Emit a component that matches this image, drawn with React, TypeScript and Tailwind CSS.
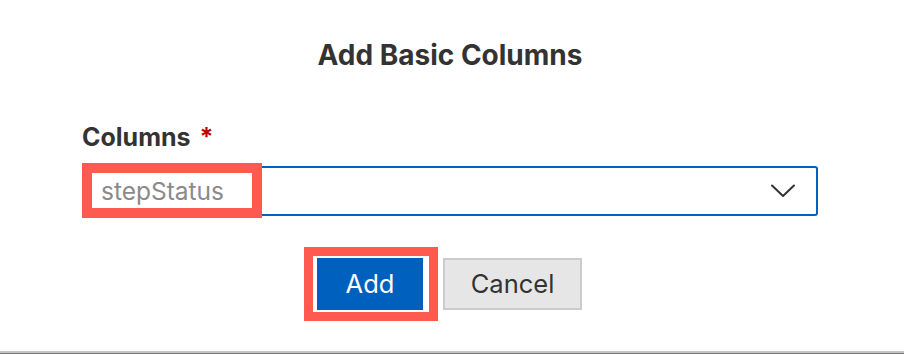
export default function App() {
  return (
    <div
      className="relative h-[354px] w-[904px] overflow-hidden bg-white text-[#333]"
      style={{ fontFamily: 'Inter, "Liberation Sans", sans-serif' }}
    >
      <div className="flex w-[900px] flex-col items-center pt-[37px]">
        <h2 className="text-[28px] font-bold leading-[36px] text-[#333]">Add Basic Columns</h2>

        <div className="mt-[48px] w-[736px] self-start ml-[82px]">
          <label className="flex items-center text-[25px] font-bold leading-[32px] text-[#333]">
            Columns
            <span className="ml-[9px] text-[#c00000]">*</span>
          </label>

          <div className="relative mt-[13px]">
            <div className="flex h-[50px] items-center justify-between rounded-[3px] border-2 border-[#0061c1] bg-white pl-[17px] pr-[21px]">
              <span className="text-[24.5px] text-[#8a8a8a]">stepStatus</span>
              <svg width="24" height="14" viewBox="0 0 24 14" fill="none">
                <polyline points="1,1.5 12,12 23,1.5" stroke="#333" strokeWidth="2" strokeLinecap="round" strokeLinejoin="round" />
              </svg>
            </div>
            {/* annotation */}
            <span className="pointer-events-none absolute left-0 top-[-3px] h-[55px] w-[180px] border-[10px] border-[#ff5a4f]" />
          </div>
        </div>

        <div className="mt-[42px] flex gap-[20px] pr-[1px]">
          <div className="relative">
            <button className="h-[52px] w-[106px] bg-[#0060bd] text-[25.5px] text-white">Add</button>
            <span className="pointer-events-none absolute -left-[13px] -right-[15px] -top-[11px] -bottom-[11px] border-[9px] border-[#ff5a4f]" />
          </div>
          <button className="h-[52px] w-[139px] border-2 border-[#cccccc] bg-[#e6e6e6] text-[25.5px] text-[#333]">
            Cancel
          </button>
        </div>
      </div>

      <div className="absolute bottom-0 left-0 h-[3px] w-full border-t-2 border-[#c4c4c4] bg-[#777]" />
    </div>
  )
}
